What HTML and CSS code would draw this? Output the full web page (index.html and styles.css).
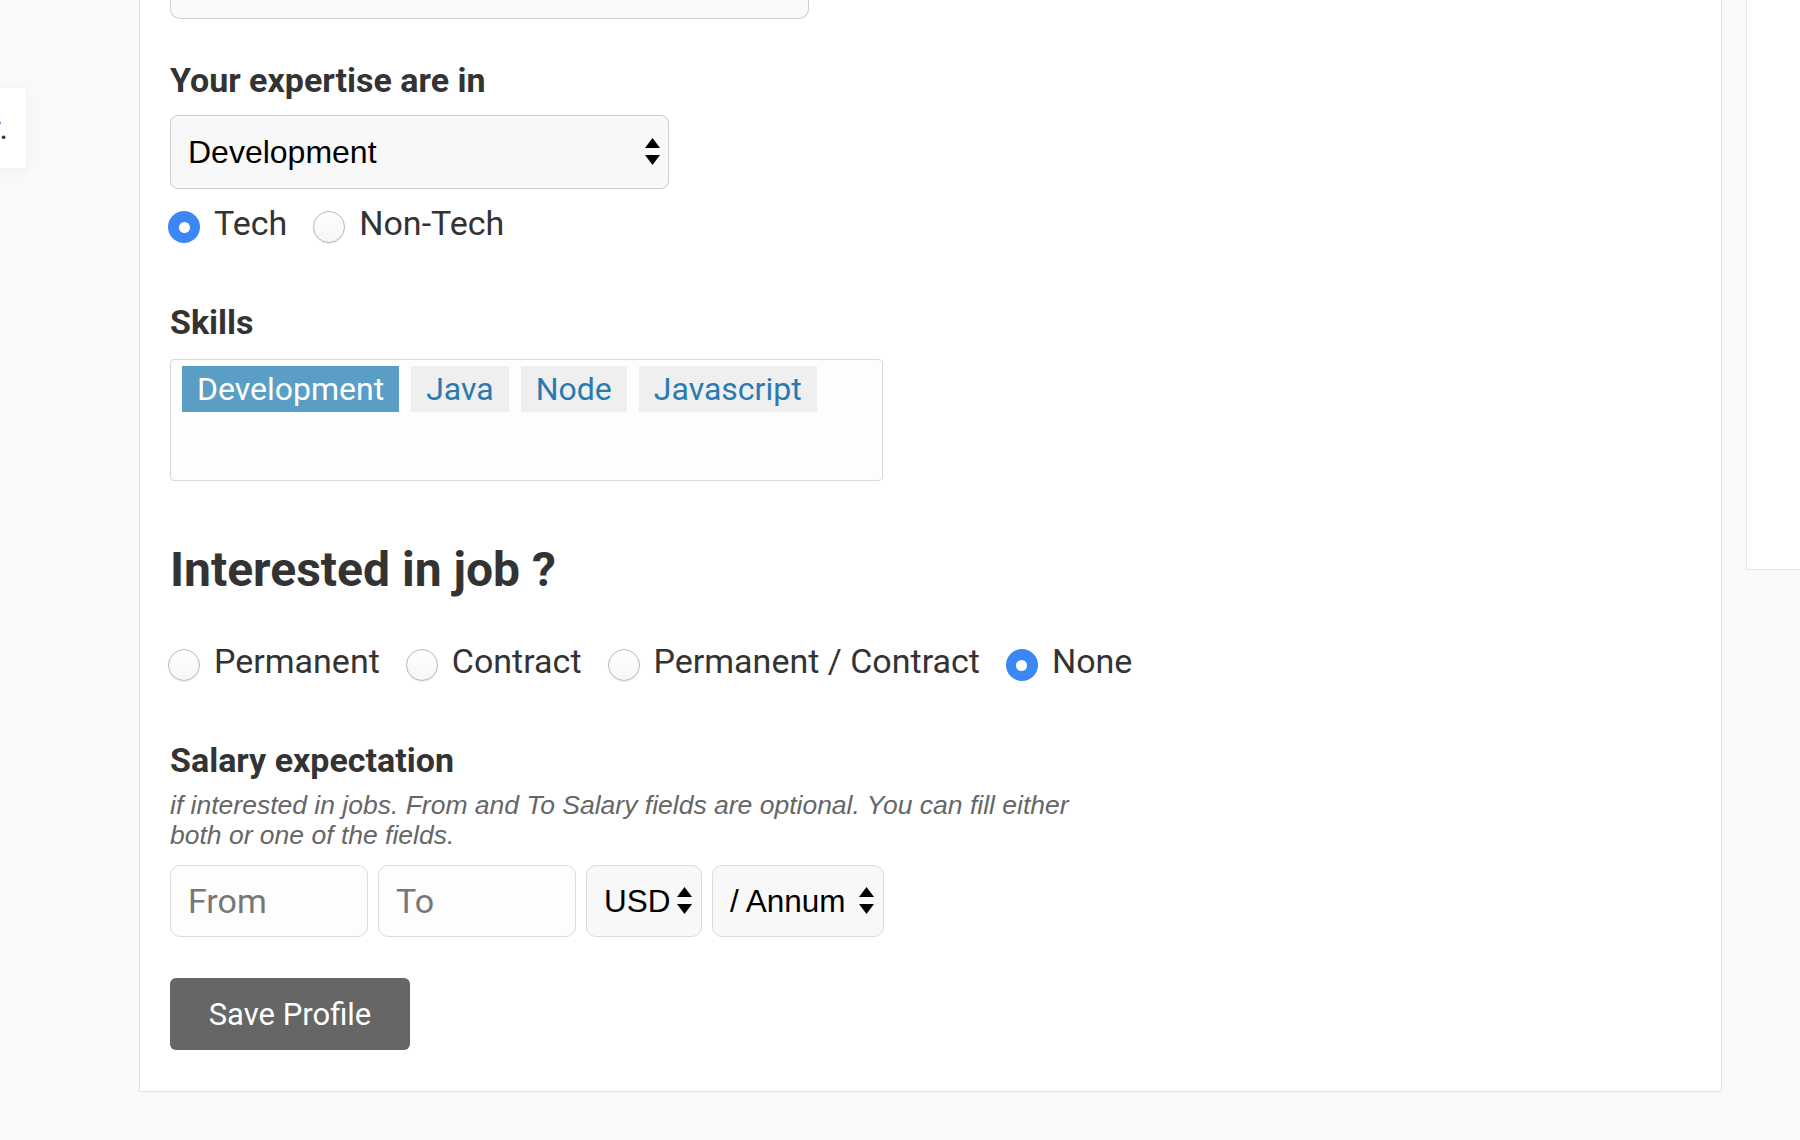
FILE: index.html
```html
<!DOCTYPE html>
<html lang="en">
<head>
<meta charset="utf-8">
<title>Profile</title>
<link rel="stylesheet" href="styles.css">
</head>
<body>
<div class="page">
  <aside class="aside">
    <div class="note"><span>Verify.</span></div>
  </aside>

  <main class="card">
    <div class="top-field"></div>

    <div class="label label-first">Your expertise are in</div>
    <div class="sel sel-big">
      <span>Development</span>
      <svg class="arrows" width="15" height="28" viewBox="0 0 15 28"><polygon points="7.5,0 15,10 0,10" fill="#000"/><polygon points="0,17 15,17 7.5,27" fill="#000"/></svg>
    </div>
    <div class="radios radios-first">
      <label class="radio-item"><span class="radio checked"></span><span>Tech</span></label>
      <label class="radio-item"><span class="radio"></span><span>Non-Tech</span></label>
    </div>

    <div class="label label-skills">Skills</div>
    <div class="tags">
      <span class="tag tag-active">Development</span>
      <span class="tag">Java</span>
      <span class="tag">Node</span>
      <span class="tag">Javascript</span>
    </div>

    <h2 class="heading">Interested in job ?</h2>
    <div class="radios radios-job">
      <label class="radio-item"><span class="radio"></span><span>Permanent</span></label>
      <label class="radio-item"><span class="radio"></span><span>Contract</span></label>
      <label class="radio-item"><span class="radio"></span><span>Permanent / Contract</span></label>
      <label class="radio-item"><span class="radio checked"></span><span>None</span></label>
    </div>

    <div class="label label-salary">Salary expectation</div>
    <p class="hint">if interested in jobs. From and To Salary fields are optional. You can fill either both or one of the fields.</p>
    <div class="salary-row">
      <input class="field" type="text" placeholder="From">
      <input class="field" type="text" placeholder="To">
      <div class="sel sel-small sel-usd">
        <span>USD</span>
        <svg class="arrows" width="15" height="28" viewBox="0 0 15 28"><polygon points="7.5,0 15,10 0,10" fill="#000"/><polygon points="0,17 15,17 7.5,27" fill="#000"/></svg>
      </div>
      <div class="sel sel-small sel-annum">
        <span>/ Annum</span>
        <svg class="arrows" width="15" height="28" viewBox="0 0 15 28"><polygon points="7.5,0 15,10 0,10" fill="#000"/><polygon points="0,17 15,17 7.5,27" fill="#000"/></svg>
      </div>
    </div>

    <button class="save" type="button">Save Profile</button>
  </main>

  <aside class="side"></aside>
</div>
</body>
</html>
```

FILE: styles.css
```css
* {
  box-sizing: border-box;
}

html,
body {
  margin: 0;
  padding: 0;
}

body {
  width: 1800px;
  height: 1140px;
  overflow: hidden;
  background: #f9f9f9;
  color: #333;
  font-family: Roboto, "Liberation Sans", Arial, sans-serif;
}

.page {
  display: flex;
  align-items: flex-start;
}

/* left off-screen note */
.aside {
  width: 139px;
  flex: none;
  padding-top: 88px;
}

.note {
  width: 26px;
  height: 80px;
  background: #fff;
  box-shadow: 0 2px 10px rgba(0, 0, 0, 0.05);
  display: flex;
  justify-content: flex-end;
  align-items: center;
  overflow: hidden;
  padding-right: 18px;
  font-size: 32px;
  white-space: nowrap;
  color: #333;
}

/* main card */
.card {
  width: 1583px;
  flex: none;
  background: #fff;
  border: 1px solid #e3e3e3;
  border-top: none;
  padding: 0 30px 41px 30px;
}

.side {
  flex: 1;
  height: 570px;
  margin-left: 24px;
  background: #fff;
  border: 1px solid #e3e3e3;
  border-top: none;
  border-right: none;
}

.top-field {
  width: 639px;
  height: 19px;
  background: #fafafa;
  border: 1px solid #cfcfcf;
  border-top: none;
  border-radius: 0 0 10px 10px;
}

.label {
  font-size: 34px;
  font-weight: 700;
  line-height: 40px;
  color: #333;
}

.label-first {
  margin-top: 41px;
}

.label-skills {
  margin-top: 59px;
}

.label-salary {
  margin-top: 59px;
}

/* select look-alikes */
.sel {
  display: flex;
  align-items: center;
  justify-content: space-between;
  background: #f8f8f8;
  border: 1px solid #cfcfcf;
  color: #000;
  font-family: "Liberation Sans", Arial, sans-serif;
  font-size: 32px;
}

.sel-big {
  margin-top: 15px;
  width: 499px;
  height: 74px;
  border-radius: 8px;
  padding: 0 8px 0 17px;
}

.arrows {
  flex: none;
  display: block;
}

/* radios */
.radios {
  display: flex;
  align-items: flex-start;
  height: 40px;
  font-size: 34px;
  line-height: 40px;
  color: #333;
}

.radios-first {
  margin-top: 14px;
}

.radios-job {
  margin-top: 43px;
}

.radio-item {
  display: flex;
  align-items: flex-start;
  margin-right: 28px;
}

.radio {
  width: 32px;
  height: 32px;
  margin-top: 8px;
  margin-left: -2px;
  margin-right: 14px;
  border-radius: 50%;
  border: 1px solid #b9b9b9;
  background: linear-gradient(#fff, #f6f6f6);
  box-shadow: 0 1px 1px rgba(0, 0, 0, 0.08);
  flex: none;
  position: relative;
}

.radio.checked {
  border: none;
  background: #3b87f6;
  box-shadow: none;
}

.radio.checked::after {
  content: "";
  position: absolute;
  left: 10.5px;
  top: 10.5px;
  width: 11px;
  height: 11px;
  border-radius: 50%;
  background: #fff;
}

/* skills tags */
.tags {
  margin-top: 17px;
  width: 713px;
  height: 122px;
  border: 1px solid #d9d9d9;
  border-radius: 4px;
  background: #fdfdfd;
  padding: 6px 10px 6px 11px;
  display: flex;
  align-items: flex-start;
  gap: 12px;
}

.tag {
  height: 46px;
  line-height: 46px;
  padding: 0 15px;
  background: #efefef;
  color: #2a7ab1;
  font-size: 32px;
}

.tag-active {
  background: #5a9ec5;
  color: #fff;
}

.heading {
  margin: 61px 0 0 0;
  font-size: 48px;
  font-weight: 700;
  line-height: 56px;
  color: #333;
}

.hint {
  margin: 10px 0 0 0;
  max-width: 915px;
  font-family: "Liberation Sans", Arial, sans-serif;
  font-size: 26.5px;
  line-height: 30px;
  font-style: italic;
  color: #666;
}

.salary-row {
  margin-top: 15px;
  display: flex;
  gap: 10px;
  height: 72px;
}

.field {
  width: 198px;
  height: 72px;
  margin: 0;
  border: 1px solid #dcdcdc;
  border-radius: 10px;
  background: #fdfdfd;
  padding: 0 0 0 17px;
  font-family: Roboto, "Liberation Sans", Arial, sans-serif;
  font-size: 34px;
  color: #333;
  outline: none;
}

.field::placeholder {
  color: #777;
}

.sel-small {
  height: 72px;
  border-color: #dcdcdc;
  border-radius: 10px;
  padding: 0 9px 0 17px;
  font-size: 31.5px;
}

.sel-usd {
  width: 116px;
}

.sel-annum {
  width: 172px;
}

.save {
  display: block;
  margin-top: 41px;
  width: 240px;
  height: 72px;
  border: none;
  border-radius: 6px;
  background: #666;
  color: #fff;
  font-family: Roboto, "Liberation Sans", Arial, sans-serif;
  font-size: 31px;
  padding: 0;
}
```
